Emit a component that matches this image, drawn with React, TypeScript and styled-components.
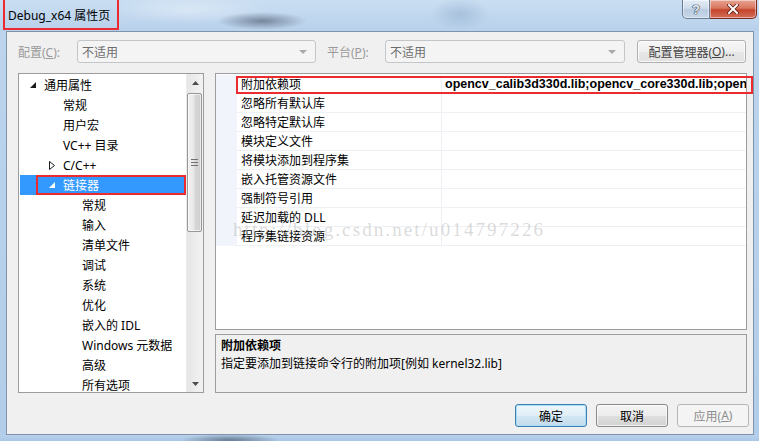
import React from "react";
import styled, { createGlobalStyle } from "styled-components";

const UI = `"Segoe UI", "Noto Sans", "Noto Sans CJK SC", sans-serif`;

const Global = createGlobalStyle`
  html, body { margin: 0; padding: 0; background: #bcd4ec; }
  body { font-family: ${UI}; font-size: 12px; color: #000; }
  * { box-sizing: border-box; }
`;

const Window = styled.div`
  width: 759px;
  height: 441px;
  display: flex;
  flex-direction: column;
  overflow: hidden;
  background: linear-gradient(180deg, #c3d9ef 0%, #b7d0ea 100%);
`;

const TitleBar = styled.div`
  height: 31px;
  flex: none;
  display: flex;
  align-items: flex-start;
  background:
    radial-gradient(ellipse 45px 9px at 262px 21px, rgba(60, 70, 90, 0.55), transparent),
    radial-gradient(ellipse 80px 14px at 190px 10px, rgba(255, 255, 255, 0.35), transparent),
    radial-gradient(ellipse 30px 16px at 460px 14px, rgba(120, 150, 185, 0.35), transparent),
    linear-gradient(180deg, #cadef2 0%, #bfd6ee 60%, #b8d1eb 100%);
`;

const TitleBox = styled.div`
  margin-left: 3px;
  width: 116px;
  height: 30px;
  border: 2px solid #ec2b30;
  border-top: none;
  padding-left: 3px;
  display: flex;
  align-items: center;
  padding-top: 1px;
  font-family: ${UI};
  font-size: 12px;
  color: #000;
  white-space: nowrap;
`;

const CaptionGroup = styled.div`
  margin-left: auto;
  margin-right: 2px;
  display: flex;
  height: 19px;
`;

const CaptionButton = styled.div<{ $close?: boolean }>`
  width: ${(p) => (p.$close ? 47 : 28)}px;
  height: 19px;
  display: flex;
  align-items: center;
  justify-content: center;
  border: 1px solid ${(p) => (p.$close ? "#7d2a22" : "#6d7f95")};
  border-top: none;
  border-left: ${(p) => (p.$close ? "none" : "1px solid #6d7f95")};
  border-radius: ${(p) => (p.$close ? "0 0 5px 0" : "0 0 0 5px")};
  background: ${(p) =>
    p.$close
      ? "linear-gradient(180deg, #e8a493 0%, #d9765f 45%, #c5432b 55%, #d2705a 100%)"
      : "linear-gradient(180deg, #e4edf7 0%, #cfdcea 45%, #b9cbe0 55%, #c8d8ea 100%)"};
  box-shadow: inset 0 0 0 1px rgba(255, 255, 255, 0.45);
`;

const HelpMark = styled.span`
  font-family: "Liberation Sans", sans-serif;
  font-weight: bold;
  font-size: 13px;
  color: #eef3f8;
  text-shadow: 0 0 1px #1f2f45, 0 0 1px #1f2f45, 0 0 1px #1f2f45;
`;

const Body = styled.div`
  flex: 1;
  display: flex;
  min-height: 0;
`;

const SideFrame = styled.div<{ $w: number }>`
  width: ${(p) => p.$w}px;
  flex: none;
  background: linear-gradient(180deg, #bcd4ec 0%, #b2cde9 100%);
`;

const Client = styled.div`
  flex: 1;
  display: flex;
  flex-direction: column;
  background: #f0f0f0;
  border: 1px solid #7f93ab;
  padding: 8px 6px 7px 11px;
`;

const BottomFrame = styled.div`
  height: 6px;
  flex: none;
  background:
    radial-gradient(ellipse 50px 6px at 230px 5px, rgba(40, 50, 70, 0.5), transparent),
    linear-gradient(180deg, #b8d1eb, #a9c7e6);
`;

/* ---------- top configuration row ---------- */
const ConfigRow = styled.div`
  height: 23px;
  display: flex;
  align-items: center;
  flex: none;
`;

const Label = styled.div<{ $w: number }>`
  width: ${(p) => p.$w}px;
  flex: none;
  color: #9a9a9a;
  font-size: 12px;
  white-space: nowrap;
  u { text-decoration: underline; }
`;

const Combo = styled.div<{ $w: number }>`
  width: ${(p) => p.$w}px;
  height: 23px;
  flex: none;
  border: 1px solid #c4c7ca;
  border-radius: 3px;
  background: #f4f4f4;
  color: #6d6d6d;
  display: flex;
  align-items: center;
  padding: 0 8px 0 4px;
  justify-content: space-between;
`;

const ComboArrow = styled.span`
  width: 0;
  height: 0;
  border-left: 4px solid transparent;
  border-right: 4px solid transparent;
  border-top: 4px solid #a9a9a9;
`;

const Gap = styled.div<{ $w: number }>`
  width: ${(p) => p.$w}px;
  flex: none;
`;

const PushButton = styled.div<{ $w: number; $variant?: "default" | "disabled" }>`
  width: ${(p) => p.$w}px;
  height: 23px;
  flex: none;
  display: flex;
  align-items: center;
  justify-content: center;
  border-radius: 3px;
  font-size: 12px;
  white-space: nowrap;
  border: 1px solid
    ${(p) =>
      p.$variant === "default" ? "#3c7fb1" : p.$variant === "disabled" ? "#b4b7ba" : "#8a8a8a"};
  color: ${(p) => (p.$variant === "disabled" ? "#8d8d8d" : "#000")};
  background: ${(p) =>
    p.$variant === "default"
      ? "linear-gradient(180deg, #eef6fc 0%, #e1eef8 50%, #d3e6f3 51%, #c5dcec 100%)"
      : p.$variant === "disabled"
      ? "#f4f4f4"
      : "linear-gradient(180deg, #f4f4f4 0%, #ececec 50%, #dfdfdf 51%, #d2d2d2 100%)"};
  box-shadow: ${(p) =>
    p.$variant === "default"
      ? "inset 0 0 0 1px #a9dcf6"
      : p.$variant === "disabled"
      ? "none"
      : "inset 0 0 0 1px rgba(255,255,255,0.7)"};
  u { text-decoration: underline; }
`;

const ManagerButton = styled(PushButton)`
  border-color: #b0b0b0;
  color: #444;
  background: linear-gradient(180deg, #f6f6f6 0%, #efefef 50%, #e7e7e7 51%, #e2e2e2 100%);
`;

/* ---------- main area ---------- */
const Main = styled.div`
  margin-top: 10px;
  height: 320px;
  flex: none;
  display: grid;
  grid-template-columns: 186px 532px;
  column-gap: 11px;
`;

const TreePanel = styled.div`
  border: 1px solid #9c9c9c;
  background: #fff;
  display: flex;
  overflow: hidden;
`;

const TreeList = styled.div`
  flex: 1;
  padding-top: 1px;
  overflow: hidden;
`;

const TreeRow = styled.div<{ $level: number; $selected?: boolean }>`
  position: relative;
  height: 20px;
  margin: 0 1px;
  display: flex;
  align-items: center;
  padding-left: ${(p) => 10 + (p.$level - 1) * 19}px;
  background: ${(p) => (p.$selected ? "#3399ff" : "transparent")};
  color: ${(p) => (p.$selected ? "#fff" : "#000")};
  white-space: nowrap;
  font-size: 12px;
  &::after {
    content: "";
    display: ${(p) => (p.$selected ? "block" : "none")};
    position: absolute;
    left: 16px;
    right: -1px;
    top: 0;
    bottom: 0;
    border: 2px solid #ec2b30;
  }
`;

const Expander = styled.span`
  width: 14px;
  flex: none;
  display: flex;
  align-items: center;
`;

const Scrollbar = styled.div`
  width: 17px;
  flex: none;
  display: flex;
  flex-direction: column;
  background: linear-gradient(90deg, #e6e6e6 0%, #f3f3f3 100%);
  border-left: 1px solid #ececec;
`;

const ScrollArrow = styled.div`
  height: 17px;
  flex: none;
  display: flex;
  align-items: center;
  justify-content: center;
`;

const ScrollThumb = styled.div`
  margin: 2px 1px 0 0;
  height: 139px;
  border: 1px solid #979797;
  border-radius: 2px;
  background: linear-gradient(90deg, #f2f2f2 0%, #e8e8e8 45%, #d6d6d6 55%, #cfcfcf 100%);
  box-shadow: inset 0 0 0 1px rgba(255, 255, 255, 0.6);
  display: flex;
  align-items: center;
  justify-content: center;
`;

const ScrollTrack = styled.div`
  flex: 1;
`;

const RightColumn = styled.div`
  display: flex;
  flex-direction: column;
  gap: 4px;
`;

const PropGrid = styled.div`
  position: relative;
  height: 257px;
  flex: none;
  border: 1px solid #9c9c9c;
  background: #fff;
  padding-top: 1px;
`;

const PropRow = styled.div<{ $marked?: boolean }>`
  position: relative;
  height: 19px;
  display: grid;
  grid-template-columns: 21px 204px 1fr;
  &::after {
    content: "";
    display: ${(p) => (p.$marked ? "block" : "none")};
    position: absolute;
    left: 20px;
    right: -7px;
    top: 1px;
    bottom: 0;
    border: 2px solid #ec2b30;
    pointer-events: none;
  }
`;

const PropMargin = styled.div`
  background: #f1f5fb;
`;

const PropName = styled.div`
  border-bottom: 1px solid #edf0f4;
  padding-left: 4px;
  display: flex;
  align-items: center;
  white-space: nowrap;
  font-size: 12px;
`;

const PropValue = styled.div`
  border-bottom: 1px solid #edf0f4;
  border-left: 1px solid #edf0f4;
  padding-left: 3px;
  display: flex;
  align-items: center;
  white-space: nowrap;
  overflow: hidden;
  font-family: "Liberation Sans", "Noto Sans", sans-serif;
  font-weight: bold;
  font-size: 12.5px;
`;

const Watermark = styled.div`
  position: absolute;
  left: 17px;
  top: 144px;
  line-height: 24px;
  font-family: "Liberation Serif", serif;
  font-size: 19px;
  letter-spacing: 2.1px;
  color: rgba(150, 150, 150, 0.35);
  white-space: nowrap;
  pointer-events: none;
`;

const Description = styled.div`
  flex: 1;
  border: 1px solid #9c9c9c;
  background: #f0f0f0;
  padding: 2px 5px 0 5px;
  line-height: 18px;
  font-size: 12px;
`;

const DescTitle = styled.div`
  font-weight: bold;
`;

const ButtonRow = styled.div`
  margin-top: 11px;
  margin-right: -2px;
  height: 23px;
  flex: none;
  display: flex;
  justify-content: flex-end;
  gap: 9px;
`;

/* ---------- icons ---------- */
const ExpandedGlyph = ({ color }: { color: string }) => (
  <svg width="6" height="6" viewBox="0 0 6 6">
    <polygon points="6,0 6,6 0,6" fill={color} />
  </svg>
);

const CollapsedGlyph = () => (
  <svg width="6" height="9" viewBox="0 0 6 9">
    <polygon points="0.5,0.5 5.5,4.5 0.5,8.5" fill="#fff" stroke="#1a1a1a" strokeWidth="1" />
  </svg>
);

const SmallTriangle = ({ up }: { up?: boolean }) => (
  <svg width="7" height="4" viewBox="0 0 7 4">
    <polygon points={up ? "3.5,0 7,4 0,4" : "0,0 7,0 3.5,4"} fill="#4d4d4d" />
  </svg>
);

const Grip = () => (
  <svg width="7" height="7" viewBox="0 0 7 7">
    <path d="M0 0.5H7M0 3.5H7M0 6.5H7" stroke="#6f6f6f" strokeWidth="1" />
  </svg>
);

const CloseGlyph = () => (
  <svg width="12" height="10" viewBox="0 0 12 10">
    <path d="M2 1L10 9M10 1L2 9" stroke="#5a1a12" strokeWidth="3.6" strokeLinecap="square" />
    <path d="M2 1L10 9M10 1L2 9" stroke="#ffffff" strokeWidth="2" strokeLinecap="square" />
  </svg>
);

/* ---------- data ---------- */
type TreeItem = { label: string; level: number; state?: "open" | "closed"; selected?: boolean };

const treeItems: TreeItem[] = [
  { label: "通用属性", level: 1, state: "open" },
  { label: "常规", level: 2 },
  { label: "用户宏", level: 2 },
  { label: "VC++ 目录", level: 2 },
  { label: "C/C++", level: 2, state: "closed" },
  { label: "链接器", level: 2, state: "open", selected: true },
  { label: "常规", level: 3 },
  { label: "输入", level: 3 },
  { label: "清单文件", level: 3 },
  { label: "调试", level: 3 },
  { label: "系统", level: 3 },
  { label: "优化", level: 3 },
  { label: "嵌入的 IDL", level: 3 },
  { label: "Windows 元数据", level: 3 },
  { label: "高级", level: 3 },
  { label: "所有选项", level: 3 },
];

const props: { name: string; value?: string }[] = [
  { name: "附加依赖项", value: "opencv_calib3d330d.lib;opencv_core330d.lib;opencv_features2d330d.lib" },
  { name: "忽略所有默认库" },
  { name: "忽略特定默认库" },
  { name: "模块定义文件" },
  { name: "将模块添加到程序集" },
  { name: "嵌入托管资源文件" },
  { name: "强制符号引用" },
  { name: "延迟加载的 DLL" },
  { name: "程序集链接资源" },
];

export default function App() {
  return (
    <>
      <Global />
      <Window>
        <TitleBar>
          <TitleBox>Debug_x64 属性页</TitleBox>
          <CaptionGroup>
            <CaptionButton>
              <HelpMark>?</HelpMark>
            </CaptionButton>
            <CaptionButton $close>
              <CloseGlyph />
            </CaptionButton>
          </CaptionGroup>
        </TitleBar>
        <Body>
          <SideFrame $w={6} />
          <Client>
            <ConfigRow>
              <Label $w={59}>
                配置(<u>C</u>):
              </Label>
              <Combo $w={239}>
                <span>不适用</span>
                <ComboArrow />
              </Combo>
              <Gap $w={11} />
              <Label $w={58}>
                平台(<u>P</u>):
              </Label>
              <Combo $w={240}>
                <span>不适用</span>
                <ComboArrow />
              </Combo>
              <Gap $w={12} />
              <ManagerButton $w={109}>
                配置管理器(<u>O</u>)...
              </ManagerButton>
            </ConfigRow>

            <Main>
              <TreePanel>
                <TreeList>
                  {treeItems.map((t, i) => (
                    <TreeRow key={i} $level={t.level} $selected={t.selected}>
                      <Expander>
                        {t.state === "open" && <ExpandedGlyph color={t.selected ? "#fff" : "#1a1a1a"} />}
                        {t.state === "closed" && <CollapsedGlyph />}
                      </Expander>
                      {t.label}
                    </TreeRow>
                  ))}
                </TreeList>
                <Scrollbar>
                  <ScrollArrow>
                    <SmallTriangle up />
                  </ScrollArrow>
                  <ScrollThumb>
                    <Grip />
                  </ScrollThumb>
                  <ScrollTrack />
                  <ScrollArrow>
                    <SmallTriangle />
                  </ScrollArrow>
                </Scrollbar>
              </TreePanel>

              <RightColumn>
                <PropGrid>
                  {props.map((p, i) => (
                    <PropRow key={i} $marked={i === 0}>
                      <PropMargin />
                      <PropName>{p.name}</PropName>
                      <PropValue>{p.value ?? ""}</PropValue>
                    </PropRow>
                  ))}
                  <Watermark>http://blog.csdn.net/u014797226</Watermark>
                </PropGrid>
                <Description>
                  <DescTitle>附加依赖项</DescTitle>
                  <div>指定要添加到链接命令行的附加项[例如 kernel32.lib]</div>
                </Description>
              </RightColumn>
            </Main>

            <ButtonRow>
              <PushButton $w={72} $variant="default">确定</PushButton>
              <PushButton $w={72}>取消</PushButton>
              <PushButton $w={72} $variant="disabled">
                应用(<u>A</u>)
              </PushButton>
            </ButtonRow>
          </Client>
          <SideFrame $w={5} />
        </Body>
        <BottomFrame />
      </Window>
    </>
  );
}
